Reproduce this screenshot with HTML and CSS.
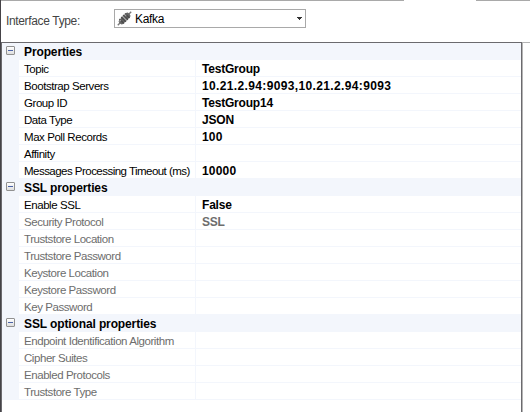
FILE: index.html
```
<!DOCTYPE html>
<html lang="en">
<head>
<meta charset="utf-8">
<title>Interface properties</title>
<link rel="stylesheet" href="styles.css">
</head>
<body>
<main class="window">
  <div class="top-edge"><i></i><i></i></div>
  <div class="toolbar">
    <span class="label">Interface Type:</span>
    <div class="combo">
      <svg class="plug" width="17" height="17" viewBox="0 0 17 17">
        <g transform="rotate(-45 8.5 8.5)">
          <path d="M-1 8.5H18" stroke="#777" stroke-width="1.4"/>
          <rect x="1.8" y="5.8" width="13.4" height="5.6" rx="2" fill="#666"/>
          <path d="M4.6 5.2v6.6M7.2 5.2v6.6M10 5.2v6.6M12.4 5.2v6.6" stroke="#4c4c4c" stroke-width="1.4"/>
          <path d="M8.6 5v7M3 7h2M10.5 7h2" stroke="#aaa" stroke-width="1"/>
        </g>
      </svg>
      <span class="choice">Kafka</span>
      <svg class="arrow" width="5" height="3" viewBox="0 0 5 3" shape-rendering="crispEdges"><path d="M0 0h5v1H4v1H3v1H2V2H1V1H0z" fill="#333"/></svg>
    </div>
  </div>
  <div class="body">
    <div class="grid">
      <div class="head"><i class="toggle"></i><b>Properties</b></div>
      <div class="row"><span>Topic</span><b>TestGroup</b></div>
      <div class="row"><span>Bootstrap Servers</span><b class="servers">10.21.2.94:9093,10.21.2.94:9093</b></div>
      <div class="row"><span>Group ID</span><b>TestGroup14</b></div>
      <div class="row"><span>Data Type</span><b>JSON</b></div>
      <div class="row"><span>Max Poll Records</span><b class="digits">100</b></div>
      <div class="row"><span>Affinity</span><b></b></div>
      <div class="row"><span class="long">Messages Processing Timeout (ms)</span><b class="digits">10000</b></div>
      <div class="head"><i class="toggle"></i><b>SSL properties</b></div>
      <div class="row"><span>Enable SSL</span><b>False</b></div>
      <div class="row off"><span>Security Protocol</span><b>SSL</b></div>
      <div class="row off"><span>Truststore Location</span><b></b></div>
      <div class="row off"><span>Truststore Password</span><b></b></div>
      <div class="row off"><span>Keystore Location</span><b></b></div>
      <div class="row off"><span>Keystore Password</span><b></b></div>
      <div class="row off"><span>Key Password</span><b></b></div>
      <div class="head"><i class="toggle"></i><b>SSL optional properties</b></div>
      <div class="row off"><span>Endpoint Identification Algorithm</span><b></b></div>
      <div class="row off"><span>Cipher Suites</span><b></b></div>
      <div class="row off"><span>Enabled Protocols</span><b></b></div>
      <div class="row off"><span>Truststore Type</span><b></b></div>
    </div>
    <div class="side"></div>
  </div>
</main>
</body>
</html>
```
FILE: styles.css
```
* { box-sizing: border-box; }
body { margin: 0; background: #fff; font: 12px/17px "Liberation Sans", Arial, sans-serif; color: #000; }
.window { width: 530px; height: 412px; overflow: hidden; display: flex; flex-direction: column; border-left: 1px solid #454347; }
.top-edge { height: 1px; display: flex; justify-content: space-between; }
.top-edge i { background: #a9a9a9; width: 403px; }
.top-edge i + i { width: 54px; }
.toolbar { height: 41px; display: flex; align-items: flex-start; padding-left: 5px; }
.label { width: 108px; padding-top: 12px; color: #444; letter-spacing: -.35px; white-space: nowrap; }
.combo { width: 192px; height: 19px; margin-top: 8px; border: 1px solid #a9a9a9; display: flex; align-items: center; padding: 0 3px 0 1px; }
.choice { flex: 1; padding-left: 2px; margin-top: 1px; letter-spacing: -.3px; }
.body { flex: 1; display: flex; }
.grid { width: 521px; border: solid #6b6a6e; border-width: 1px 1px 0 1px; }
.side { flex: 1; border: solid #b4b4b4; border-width: 1px 0 0 1px; }
.head, .row { height: 17px; display: flex; white-space: nowrap; }
.head { background: #f3f6fc; }
.head b { padding-top: 1px; letter-spacing: -.12px; }
.toggle { width: 9px; height: 9px; margin: 3px 9px 0 4px; border: 1px solid #919191; border-radius: 1px; background: linear-gradient(#4b63a7, #4b63a7) center / 5px 1px no-repeat, linear-gradient(#fff, #dedede); }
.row { border-left: 17px solid #f3f6fc; }
.row span, .row b { border-bottom: 1px solid #f3f6fc; padding-left: 5px; padding-top: 1px; }
.row span { width: 177px; border-right: 1px solid #f3f6fc; font-size: 11.5px; letter-spacing: -.44px; }
.row .long { letter-spacing: -.53px; }
.row b { flex: 1; letter-spacing: -.2px; padding-left: 6px; }
.row .digits { letter-spacing: .2px; }
.row .servers { letter-spacing: .36px; }
.off { color: #6d6d6d; }
```
